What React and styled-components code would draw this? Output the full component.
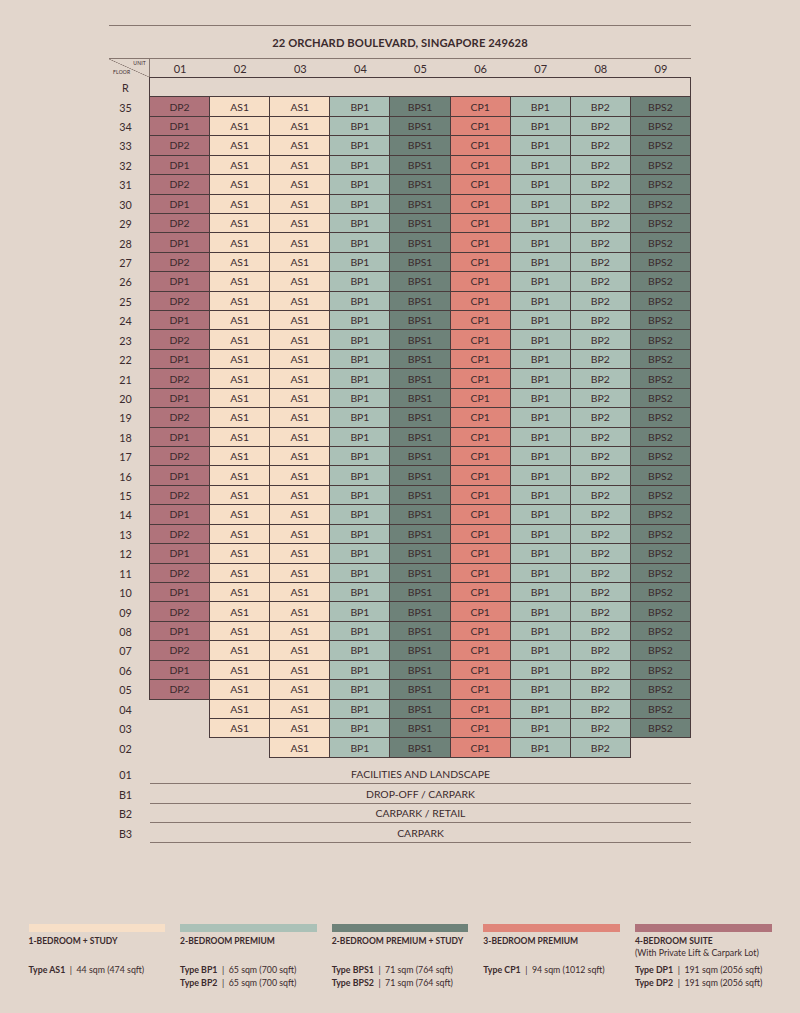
import React from "react";
import styled, { createGlobalStyle } from "styled-components";

const COLORS = {
  DP: "#b0737b",
  AS: "#f7dfc7",
  BP: "#abc1b7",
  BPS: "#6e8279",
  CP: "#e0867a",
};

const INK = "#3b2a2d";
const GRID = "#4a3b3c";
const RULE = "#86766f";

const GlobalStyle = createGlobalStyle`
  html, body { margin: 0; padding: 0; background: #e2d6cc; }
  body { font-family: Lato, "Open Sans", sans-serif; color: ${INK}; }
`;

const Page = styled.div`
  padding-top: 25px;
  width: 800px;
  min-height: 1013px;
  box-sizing: border-box;
`;

const Sheet = styled.div`
  width: 582px;
  margin: 0 auto;
`;

const TopRule = styled.div`
  border-top: 1px solid ${RULE};
`;

const Title = styled.h1`
  margin: 0;
  height: 32px;
  display: flex;
  align-items: center;
  justify-content: center;
  font-size: 11.2px;
  font-weight: 700;
  letter-spacing: 0.1px;
  color: ${INK};
`;

const HeaderRow = styled.div`
  display: grid;
  grid-template-columns: 41px repeat(9, 1fr);
  height: 19px;
  border-top: 1px solid ${RULE};
  box-sizing: border-box;
`;

const Corner = styled.div`
  border-right: 1px solid ${RULE};
  background: linear-gradient(
    to top right,
    transparent calc(50% - 0.6px),
    ${RULE} 50%,
    transparent calc(50% + 0.6px)
  );
  display: flex;
  flex-direction: column;
  justify-content: space-between;
  padding: 1px 3px 1px 4px;
  font-size: 5px;
  line-height: 7px;
  letter-spacing: 0.2px;
`;

const CornerUnit = styled.span`
  align-self: flex-end;
`;

const CornerFloor = styled.span`
  align-self: flex-start;
`;

const UnitHead = styled.div`
  display: flex;
  align-items: center;
  justify-content: center;
  font-size: 11px;
`;

const Grid = styled.div`
  display: grid;
  grid-template-columns: 41px repeat(9, 1fr);
  grid-auto-rows: 19.43px;
  padding-top: 1px;
`;

const FloorLabel = styled.div`
  display: flex;
  align-items: center;
  justify-content: center;
  padding-right: 8px;
  font-size: 10.8px;
`;

const Cell = styled.div`
  margin: -1px 0 0 -1px;
  border: 1px solid ${GRID};
  background: ${(p) => p.$bg || "transparent"};
  display: flex;
  align-items: center;
  justify-content: center;
  font-size: 10.4px;
  grid-column: ${(p) => (p.$span ? `span ${p.$span}` : "auto")};
`;

const Empty = styled.div``;

const Lower = styled.div`
  margin-top: 7px;
`;

const LowerRow = styled.div`
  display: grid;
  grid-template-columns: 41px 1fr;
  height: 19.5px;
`;

const LowerBand = styled.div`
  border-bottom: 1.2px solid ${RULE};
  display: flex;
  align-items: center;
  justify-content: center;
  font-size: 10.4px;
  box-sizing: border-box;
`;

const Legend = styled.div`
  width: 743px;
  margin: 81px auto 0;
  display: grid;
  grid-template-columns: repeat(5, 1fr);
  column-gap: 15px;
`;

const LegendItem = styled.div`
  display: flex;
  flex-direction: column;
`;

const Swatch = styled.div`
  height: 8px;
  background: ${(p) => p.$bg};
  margin-bottom: 3px;
`;

const LegendTitle = styled.div`
  height: 28px;
  font-size: 8.5px;
  line-height: 12px;
  font-weight: 700;
  white-space: nowrap;
`;

const LegendNote = styled.div`
  font-weight: 400;
  font-size: 8.8px;
`;

const TypeLine = styled.div`
  font-size: 8.8px;
  line-height: 13px;
  white-space: nowrap;
  b { font-weight: 700; }
`;

const UNITS = ["01", "02", "03", "04", "05", "06", "07", "08", "09"];

const floors = [];
for (let f = 35; f >= 2; f--) floors.push(f);

const pad = (n) => String(n).padStart(2, "0");

function unitsFor(f) {
  return [
    f >= 5 ? (f % 2 === 1 ? "DP2" : "DP1") : null,
    f >= 3 ? "AS1" : null,
    "AS1",
    "BP1",
    "BPS1",
    "CP1",
    "BP1",
    "BP2",
    f >= 3 ? "BPS2" : null,
  ];
}

const colorOf = (t) => COLORS[t.replace(/\d/g, "")];

const LEGEND = [
  { key: "AS", title: "1-BEDROOM + STUDY", types: [["AS1", "44 sqm (474 sqft)"]] },
  {
    key: "BP",
    title: "2-BEDROOM PREMIUM",
    types: [["BP1", "65 sqm (700 sqft)"], ["BP2", "65 sqm (700 sqft)"]],
  },
  {
    key: "BPS",
    title: "2-BEDROOM PREMIUM + STUDY",
    types: [["BPS1", "71 sqm (764 sqft)"], ["BPS2", "71 sqm (764 sqft)"]],
  },
  { key: "CP", title: "3-BEDROOM PREMIUM", types: [["CP1", "94 sqm (1012 sqft)"]] },
  {
    key: "DP",
    title: "4-BEDROOM SUITE",
    note: "(With Private Lift & Carpark Lot)",
    types: [["DP1", "191 sqm (2056 sqft)"], ["DP2", "191 sqm (2056 sqft)"]],
  },
];

const LOWER = [
  ["01", "FACILITIES AND LANDSCAPE"],
  ["B1", "DROP-OFF / CARPARK"],
  ["B2", "CARPARK / RETAIL"],
  ["B3", "CARPARK"],
];

export default function App() {
  return (
    <Page>
      <GlobalStyle />
      <Sheet>
        <TopRule />
        <Title>22 ORCHARD BOULEVARD, SINGAPORE 249628</Title>
        <HeaderRow>
          <Corner>
            <CornerUnit>UNIT</CornerUnit>
            <CornerFloor>FLOOR</CornerFloor>
          </Corner>
          {UNITS.map((u) => (
            <UnitHead key={u}>{u}</UnitHead>
          ))}
        </HeaderRow>
        <Grid>
          <FloorLabel>R</FloorLabel>
          <Cell $span={9} />
          {floors.map((f) => (
            <React.Fragment key={f}>
              <FloorLabel>{pad(f)}</FloorLabel>
              {unitsFor(f).map((t, i) =>
                t ? (
                  <Cell key={i} $bg={colorOf(t)}>
                    {t}
                  </Cell>
                ) : (
                  <Empty key={i} />
                )
              )}
            </React.Fragment>
          ))}
        </Grid>
        <Lower>
          {LOWER.map(([l, txt]) => (
            <LowerRow key={l}>
              <FloorLabel>{l}</FloorLabel>
              <LowerBand>{txt}</LowerBand>
            </LowerRow>
          ))}
        </Lower>
      </Sheet>
      <Legend>
        {LEGEND.map((g) => (
          <LegendItem key={g.key}>
            <Swatch $bg={COLORS[g.key]} />
            <LegendTitle>
              {g.title}
              {g.note && <LegendNote>{g.note}</LegendNote>}
            </LegendTitle>
            {g.types.map(([t, s]) => (
              <TypeLine key={t}>
                <b>Type {t}</b>&nbsp; | &nbsp;{s}
              </TypeLine>
            ))}
          </LegendItem>
        ))}
      </Legend>
    </Page>
  );
}
